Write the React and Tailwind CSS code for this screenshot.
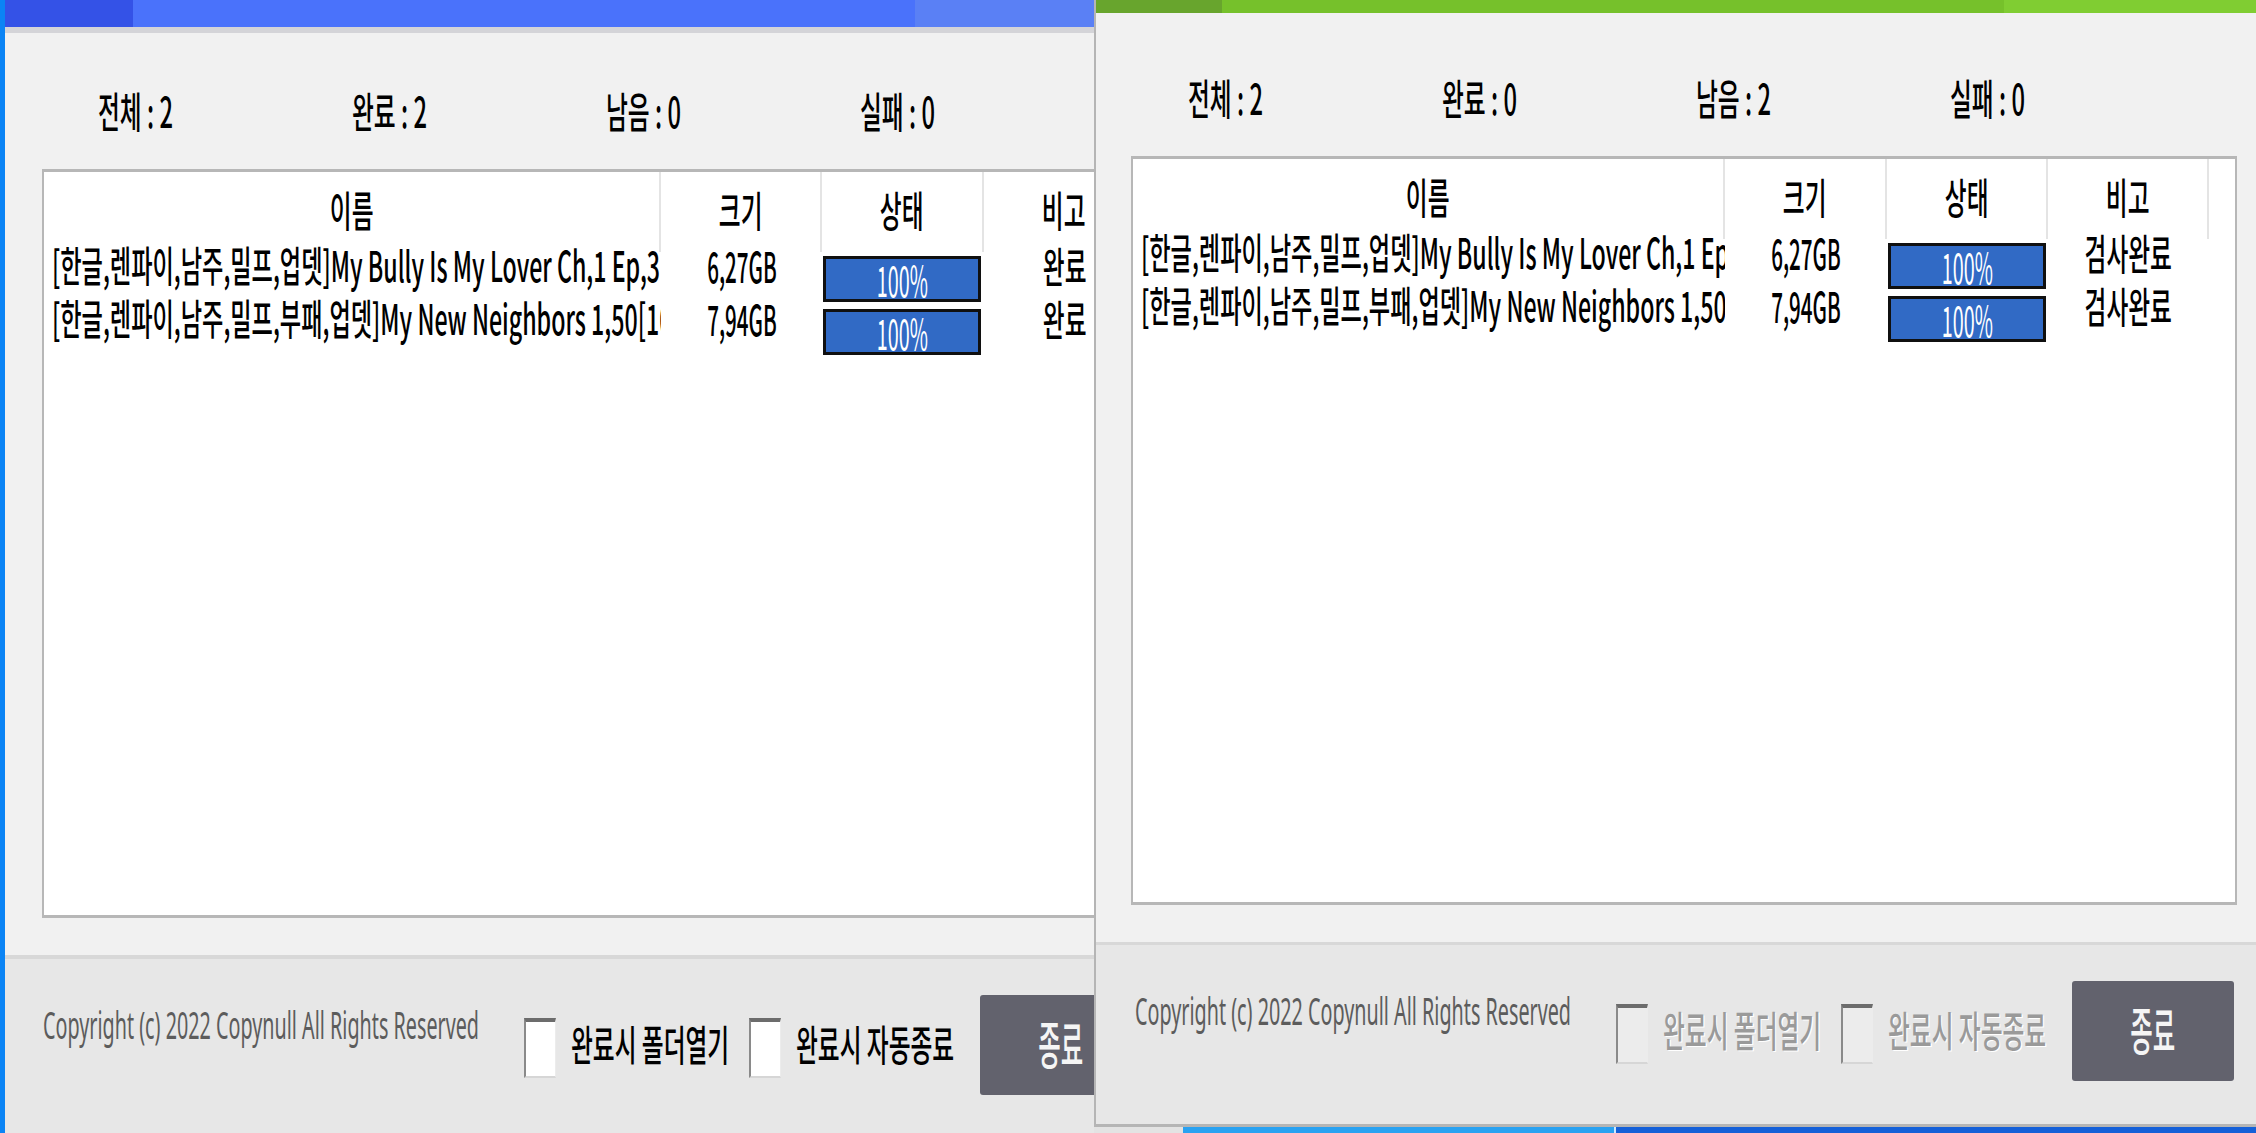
import React from 'react';

const HEADERS = ['이름', '크기', '상태', '비고'];

const ROWS = [
  { name: '[한글,렌파이,남주,밀프,업뎃]My Bully Is My Lover Ch,1 Ep,3', size: '6,27GB' },
  { name: '[한글,렌파이,남주,밀프,부패,업뎃]My New Neighbors 1,50[10', size: '7,94GB' },
];

const COLS_LEFT = ['w-[617px]', 'w-[161px]', 'w-[162px]', 'w-[161px]'];
const COLS_RIGHT = ['w-[592px]', 'w-[162px]', 'w-[161px]', 'w-[161px]'];

function Squeeze({ children, className = 'scale-x-[0.565]' }) {
  return (
    <span className={`inline-block whitespace-nowrap font-medium leading-none text-[42px] ${className}`}>
      {children}
    </span>
  );
}

function TitleBar({ left }) {
  if (left) {
    return (
      <div className="flex h-[27px] shrink-0">
        <div className="w-[128px] bg-[#3452e7]" />
        <div className="w-[782px] bg-[#4a72fb]" />
        <div className="flex-1 bg-[#5a80f5]" />
      </div>
    );
  }
  return (
    <div className="flex h-[13px] shrink-0">
      <div className="w-[126px] bg-[#68a52d]" />
      <div className="w-[782px] bg-[#76c12b]" />
      <div className="flex-1 bg-[#80cd32]" />
    </div>
  );
}

function Stats({ values, left }) {
  return (
    <div className={`flex h-[60px] shrink-0 items-center ${left ? 'pl-[93px]' : 'pl-[92px]'}`}>
      {values.map(([k, v]) => (
        <div key={k} className="w-[254px] shrink-0">
          <Squeeze className="origin-left scale-x-[0.565]">
            {k} : {v}
          </Squeeze>
        </div>
      ))}
    </div>
  );
}

function Progress() {
  return (
    <div className="ml-[1px] flex h-[46px] w-[158px] shrink-0 items-center justify-center border-[3px] border-[#101010] bg-[#316ac5]">
      <span className="inline-block whitespace-nowrap text-[42px] leading-none text-white scale-x-[0.47]">100%</span>
    </div>
  );
}

function FileTable({ cols, note, left }) {
  return (
    <div
      className={`flex h-[749px] shrink-0 flex-col border-x-2 border-y-[3px] border-[#b7b7b7] bg-white ${
        left ? 'ml-[37px] w-[1131px]' : 'ml-[35px] w-[1106px]'
      }`}
    >
      <div className="flex h-[80px] shrink-0">
        {HEADERS.map((h, i) => (
          <div
            key={h}
            className={`flex shrink-0 items-center justify-center border-r-2 border-[#e4e4e4] pb-[6px] ${cols[i]}`}
          >
            <Squeeze>{h}</Squeeze>
          </div>
        ))}
        <div className="w-[26px] shrink-0" />
      </div>
      {ROWS.map((r) => (
        <div key={r.name} className="flex h-[53px] shrink-0 items-center">
          <div className={`shrink-0 overflow-x-clip pb-[28px] pl-[8px] pr-[2px] ${cols[0]}`}>
            <Squeeze className="origin-left scale-x-[0.552]">{r.name}</Squeeze>
          </div>
          <div className={`flex shrink-0 justify-center pb-[28px] ${cols[1]}`}>
            <Squeeze className="scale-x-[0.49]">{r.size}</Squeeze>
          </div>
          <div className={`flex shrink-0 ${cols[2]}`}>
            <Progress />
          </div>
          <div className={`flex shrink-0 justify-center pb-[28px] ${cols[3]}`}>
            <Squeeze>{note}</Squeeze>
          </div>
        </div>
      ))}
    </div>
  );
}

function Check({ label, disabled, width }) {
  return (
    <div className={`mt-[59px] flex shrink-0 items-center ${width}`}>
      <div
        className={`h-[60px] w-[32px] shrink-0 border-b-2 border-l-2 border-r border-t-4 border-b-[#d6d6d6] border-l-[#8a8a8a] border-r-[#ececec] border-t-[#6c6c6c] ${
          disabled ? 'bg-[#ececec]' : 'bg-white'
        }`}
      />
      <div className="ml-[15px] pb-[8px]">
        <Squeeze
          className={`origin-left scale-x-[0.565] ${
            disabled ? 'text-[#9a9a9a] [text-shadow:2px_1px_0_#ffffff]' : 'text-black'
          }`}
        >
          {label}
        </Squeeze>
      </div>
    </div>
  );
}

function Footer({ left }) {
  return (
    <div
      className={`flex flex-1 items-start bg-[#e7e7e7] ${
        left ? 'border-t-4 pl-[38px]' : 'border-t-[3px] pl-[39px]'
      } border-[#d8d8d8]`}
    >
      <div className="mt-[46px] w-[481px] shrink-0">
        <span className="inline-block origin-left whitespace-nowrap font-['Noto_Sans',sans-serif] text-[38px] leading-none text-[#5c5c5c] scale-x-[0.52]">
          Copyright (c) 2022 Copynull All Rights Reserved
        </span>
      </div>
      <Check label="완료시 폴더열기" disabled={!left} width="w-[225px]" />
      <Check label="완료시 자동종료" disabled={!left} width="w-[231px]" />
      <button
        type="button"
        className="mt-[36px] flex h-[100px] w-[162px] shrink-0 items-center justify-center rounded-[3px] bg-[#62626d] pb-[4px]"
      >
        <span className="inline-block whitespace-nowrap text-[52px] font-medium leading-none text-[#f5f5f5] scale-x-[0.47]">
          종료
        </span>
      </button>
    </div>
  );
}

function Window({ left, stats, note }) {
  return (
    <div
      className={
        left
          ? 'flex h-full w-[1089px] shrink-0 flex-col overflow-hidden'
          : 'flex h-[1127px] flex-col overflow-hidden border-b-[3px] border-l-2 border-[#b5b5b5]'
      }
    >
      <TitleBar left={left} />
      {left && <div className="h-[6px] shrink-0 bg-[#d4d4d8]" />}
      <div className={`flex shrink-0 flex-col bg-[#f1f1f1] pb-[37px] ${left ? 'pt-[48px]' : 'pt-[55px]'}`}>
        <Stats values={stats} left={left} />
        <div className="mt-[28px] flex">
          <FileTable cols={left ? COLS_LEFT : COLS_RIGHT} note={note} left={left} />
        </div>
      </div>
      <Footer left={left} />
    </div>
  );
}

export default function App() {
  return (
    <div className="flex h-[1133px] w-[2256px] overflow-hidden bg-[#e6e6e6] font-['Noto_Sans_CJK_KR',sans-serif] text-black">
      <div className="w-[5px] shrink-0 bg-[#0b84f5]" />
      <Window
        left
        note="완료"
        stats={[
          ['전체', 2],
          ['완료', 2],
          ['남음', 0],
          ['실패', 0],
        ]}
      />
      <div className="flex w-[1162px] shrink-0 flex-col">
        <Window
          note="검사완료"
          stats={[
            ['전체', 2],
            ['완료', 0],
            ['남음', 2],
            ['실패', 0],
          ]}
        />
        <div className="flex h-[6px] shrink-0">
          <div className="w-[89px] bg-[#e3e3e3]" />
          <div className="w-[431px] bg-[#2aa2f1]" />
          <div className="w-[2px] bg-[#cfe9ff]" />
          <div className="flex-1 bg-[#1560d8]" />
        </div>
      </div>
    </div>
  );
}
